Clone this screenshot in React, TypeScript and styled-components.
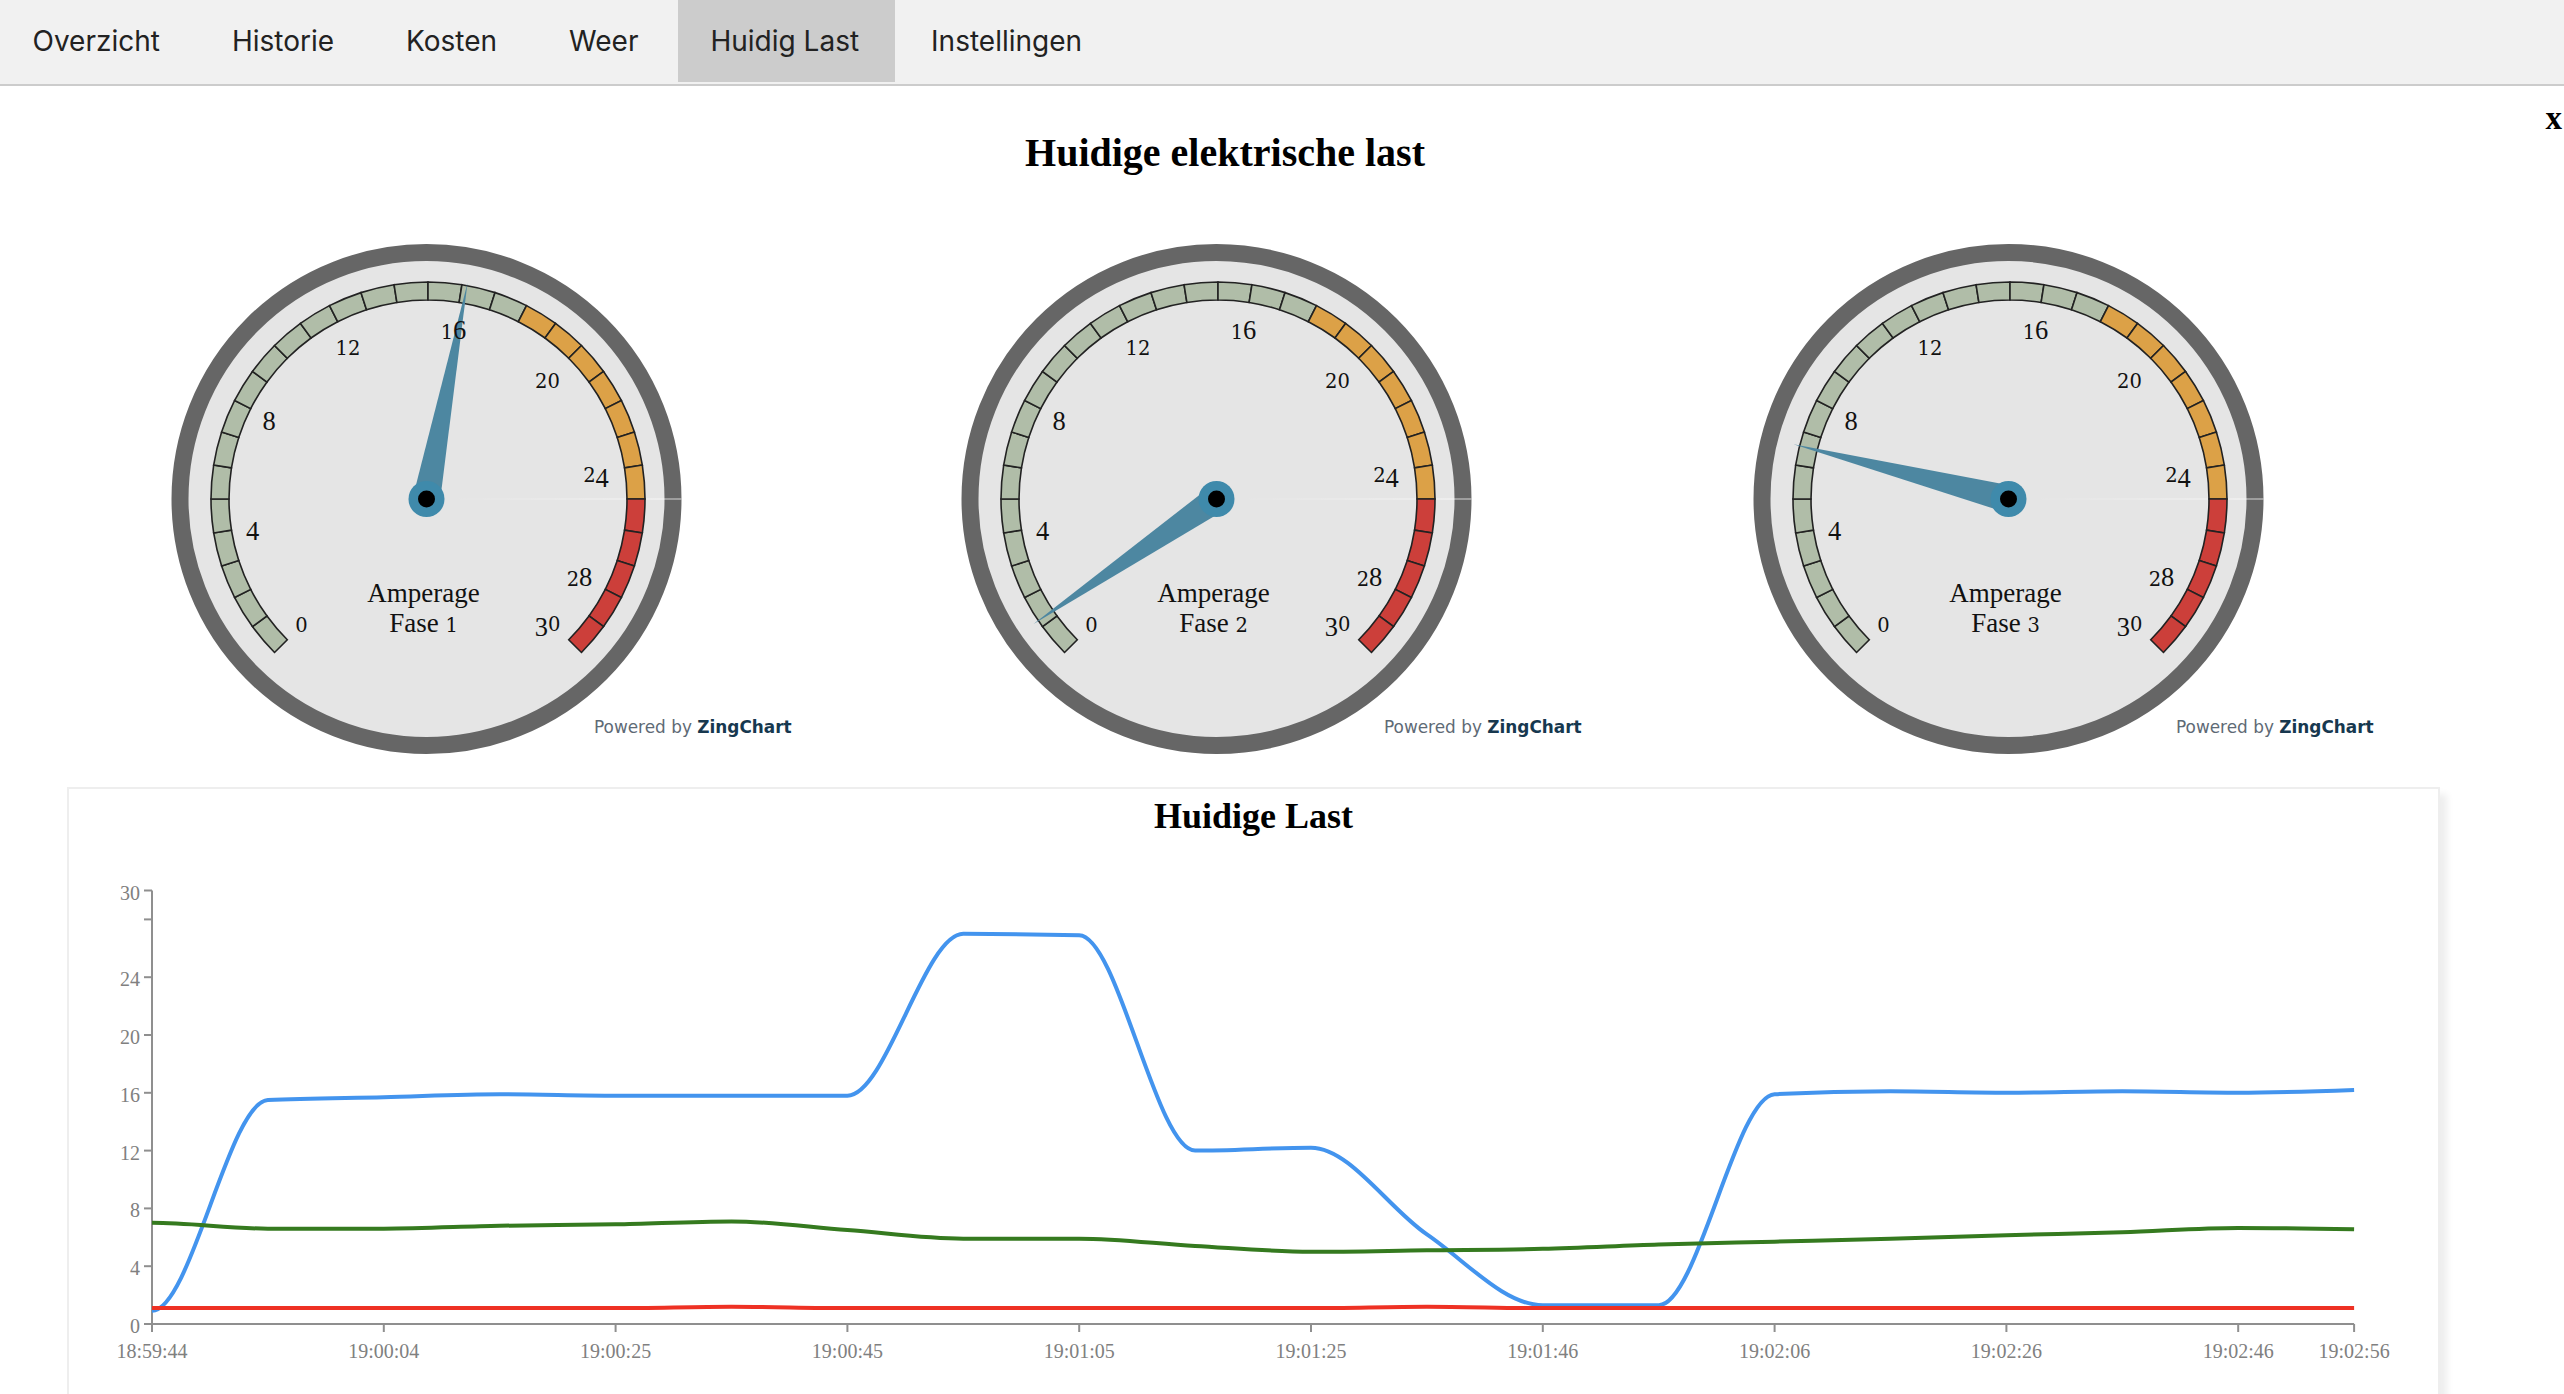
import React from "react";
import styled, { createGlobalStyle } from "styled-components";

const GlobalStyle = createGlobalStyle`
  html, body { margin: 0; padding: 0; background: #fff; }
  body { height: 1394px; overflow: hidden; font-family: "Liberation Serif", serif; }
`;

const TabBar = styled.nav`
  display: flex;
  align-items: flex-start;
  gap: 3.5px;
  height: 84px;
  background: #f1f1f1;
  border-bottom: 2px solid #ccc;
`;
const Tab = styled.button<{ $active?: boolean }>`
  height: 82px;
  padding: 0 36px 0 32.5px;
  border: 0;
  background: ${(p) => (p.$active ? "#ccc" : "transparent")};
  color: #222;
  font: 28px Inter, "Liberation Sans", Arial, sans-serif;
`;

const HeadingRow = styled.header`
  display: flex;
  align-items: flex-start;
  height: 150px;
`;
const PageTitle = styled.h2`
  flex: 0 0 2450px;
  margin: 0;
  padding-top: 44px;
  font: bold 40px/46px "Liberation Serif", serif;
  color: #000;
  text-align: center;
`;
const CloseMark = styled.span`
  margin-left: auto;
  padding: 9px 2px 0 0;
  font: bold 33px/46px "Liberation Serif", serif;
  color: #000;
`;

const GaugeRow = styled.section`
  display: grid;
  grid-template-columns: 790px 792px 760px;
  height: 551px;
  padding-left: 31px;
`;
const GaugeCell = styled.figure`
  position: relative;
  width: 760px;
  height: 551px;
  margin: 0;
`;
const GaugeSvg = styled.svg`
  display: block;
  width: 760px;
  height: 551px;
`;
const Credit = styled.a`
  position: absolute;
  left: 563px;
  top: 481px;
  font: 16.9px/20px "DejaVu Sans", Verdana, sans-serif;
  color: #5e6a75;
  white-space: nowrap;
`;
const CreditBrand = styled.b`
  color: #17384f;
`;
const GaugeText = styled.text`
  font-family: "Liberation Serif", serif;
  font-size: 27px;
  fill: #111;
  text-anchor: middle;
`;
const Digit = styled.tspan<{ $small: boolean }>`
  font-family: ${(p) => (p.$small ? '"DejaVu Serif", serif' : '"Liberation Serif", serif')};
  font-size: ${(p) => (p.$small ? "19.5px" : "26.5px")};
`;

const ChartCard = styled.section`
  width: 2369px;
  height: 700px;
  margin-left: 67px;
  border: 2px solid #eee;
  background: #fff;
  box-shadow: 7px 7px 7px rgba(0, 0, 0, 0.07);
`;
const ChartTitle = styled.h3`
  height: 60px;
  margin: 0;
  font: bold 36px/54px "Liberation Serif", serif;
  color: #000;
  text-align: center;
`;
const ChartSvg = styled.svg`
  display: block;
  width: 2369px;
  height: 600px;
`;
const AxisLabel = styled.text`
  font-family: "Liberation Serif", serif;
  font-size: 20px;
  fill: #808080;
  dominant-baseline: central;
`;

const CX = 395.5;
const CY = 263;
const BAND_CX = CX + 1.5;
const R_OUT = 217;
const R_IN = 199;

const polar = (r: number, value: number): [number, number] => {
  const a = ((value - 15) * 9 * Math.PI) / 180;
  return [BAND_CX + r * Math.sin(a), CY - r * Math.cos(a)];
};

const sector = (v: number) => {
  const [ax, ay] = polar(R_OUT, v);
  const [bx, by] = polar(R_OUT, v + 1);
  const [cx, cy] = polar(R_IN, v + 1);
  const [dx, dy] = polar(R_IN, v);
  return `M${ax} ${ay}A${R_OUT} ${R_OUT} 0 0 1 ${bx} ${by}L${cx} ${cy}A${R_IN} ${R_IN} 0 0 0 ${dx} ${dy}Z`;
};

const bandColor = (v: number) => (v < 18 ? "#b0bda8" : v < 25 ? "#dca147" : "#cc3f3a");

// x offset from centre, y offset of the text line from centre
const SCALE: [string, number, number][] = [
  ["0", -125, 133],
  ["4", -174, 36],
  ["8", -157.5, -69.5],
  ["12", -78.5, -144],
  ["16", 27, -160.5],
  ["20", 121, -111],
  ["24", 169.5, -17.5],
  ["28", 153, 87],
  ["30", 121, 132],
];

const Digits = ({ text }: { text: string }) => {
  let prev = 0;
  return (
    <>
      {text.split("").map((d, i) => {
        const small = "012".includes(d);
        const shift = "34579".includes(d) ? 5 : 0;
        const dy = shift - prev;
        prev = shift;
        return (
          <Digit key={i} $small={small} dy={dy}>
            {d}
          </Digit>
        );
      })}
    </>
  );
};

const Gauge = ({ phase, tip }: { phase: number; tip: [number, number] }) => {
  const len = Math.hypot(tip[0], tip[1]);
  const nx = (-tip[1] / len) * 13.7;
  const ny = (tip[0] / len) * 13.7;
  const segments = Array.from({ length: 30 }, (_, v) => v);
  return (
    <GaugeCell>
      <GaugeSvg viewBox="0 0 760 551">
        <defs>
          <linearGradient id={`glint${phase}`} x1="0" x2="1" y1="0" y2="0">
            <stop offset="0" stopColor="#fff" stopOpacity="0" />
            <stop offset="1" stopColor="#fff" stopOpacity="0.5" />
          </linearGradient>
        </defs>
        <circle cx={CX} cy={CY} r={246.5} fill="#e5e5e5" stroke="#666" strokeWidth={17} />
        <rect x={CX + 20} y={CY - 0.75} width={235} height={1.5} fill={`url(#glint${phase})`} />
        {segments.map((v) => (
          <path key={v} d={sector(v)} fill={bandColor(v)} stroke="#222" strokeWidth={1.6} />
        ))}
        <polygon
          points={`${CX + nx},${CY + ny} ${CX + tip[0]},${CY + tip[1]} ${CX - nx},${CY - ny}`}
          fill="#4d87a1"
        />
        {SCALE.map(([label, dx, dy]) => (
          <GaugeText key={label} x={CX + dx} y={CY + dy}>
            <Digits text={label} />
          </GaugeText>
        ))}
        <GaugeText x={CX - 3} y={CY + 103}>
          Amperage
        </GaugeText>
        <GaugeText x={CX - 3} y={CY + 133}>
          Fase <Digit $small dy={0}>{phase}</Digit>
        </GaugeText>
        <circle cx={CX} cy={CY} r={18} fill="#3f8aab" />
        <circle cx={CX} cy={CY} r={8.5} fill="#000" />
      </GaugeSvg>
      <Credit>
        Powered by <CreditBrand>ZingChart</CreditBrand>
      </Credit>
    </GaugeCell>
  );
};

const X0 = 83;
const XSTEP = 115.9;
const Y0 = 475;
const YU = 14.45;
const px = (i: number) => X0 + XSTEP * i;
const py = (v: number) => Y0 - YU * v;

const BLUE = [0.92, 15.5, 15.7, 15.9, 15.8, 15.8, 15.8, 27, 26.9, 12, 12.2, 6.2, 1.3, 1.3, 15.9, 16.1, 16, 16.1, 16, 16.2];
const GREEN = [7, 6.6, 6.6, 6.8, 6.9, 7.1, 6.5, 5.9, 5.9, 5.4, 5, 5.1, 5.2, 5.5, 5.7, 5.9, 6.15, 6.35, 6.65, 6.55];
const RED = [1.1, 1.1, 1.1, 1.1, 1.1, 1.2, 1.1, 1.1, 1.1, 1.1, 1.1, 1.2, 1.1, 1.1, 1.1, 1.1, 1.1, 1.1, 1.1, 1.1];

// Monotone cubic interpolation along x; the curve leaves its first point flat.
const monotone = (vals: number[]) => {
  const ys = vals.map(py);
  const n = ys.length;
  const s = ys.slice(1).map((y, i) => (y - ys[i]) / XSTEP);
  const m = ys.map((_, i) => {
    if (i === 0 || i === n - 1) return 0;
    const a = s[i - 1];
    const b = s[i];
    const sign = (Math.sign(a) + Math.sign(b)) || 0;
    return sign * Math.min(Math.abs(a), Math.abs(b), 0.5 * Math.abs((a + b) / 2)) || 0;
  });
  m[n - 1] = (3 * s[n - 2] - m[n - 2]) / 2;
  let d = `M${px(0)} ${ys[0]}`;
  for (let i = 0; i < n - 1; i++) {
    const h = XSTEP / 3;
    d += `C${px(i) + h} ${ys[i] + h * m[i]} ${px(i + 1) - h} ${ys[i + 1] - h * m[i + 1]} ${px(i + 1)} ${ys[i + 1]}`;
  }
  return d;
};

const Y_TICKS: [number, string][] = [
  [30, "30"],
  [28, ""],
  [24, "24"],
  [20, "20"],
  [16, "16"],
  [12, "12"],
  [8, "8"],
  [4, "4"],
  [0, "0"],
];
const X_TICKS: [number, string][] = [
  [0, "18:59:44"],
  [2, "19:00:04"],
  [4, "19:00:25"],
  [6, "19:00:45"],
  [8, "19:01:05"],
  [10, "19:01:25"],
  [12, "19:01:46"],
  [14, "19:02:06"],
  [16, "19:02:26"],
  [18, "19:02:46"],
  [19, "19:02:56"],
];

const LoadChart = () => (
  <ChartSvg viewBox="0 0 2369 600">
    <g stroke="#8f8f8f" strokeWidth={2} fill="none">
      <path d={`M${px(0)} ${py(30)}V${py(0)}H${px(19)}`} />
      {Y_TICKS.map(([v]) => (
        <path key={v} d={`M${X0 - 8} ${py(v)}H${X0}`} />
      ))}
      {X_TICKS.map(([i]) => (
        <path key={i} d={`M${px(i)} ${Y0}v8`} />
      ))}
    </g>
    {Y_TICKS.map(([v, label]) => (
      <AxisLabel key={v} x={X0 - 12} y={py(v) + 2} textAnchor="end">
        {label}
      </AxisLabel>
    ))}
    {X_TICKS.map(([i, label]) => (
      <AxisLabel key={i} x={px(i)} y={Y0 + 27} textAnchor="middle">
        {label}
      </AxisLabel>
    ))}
    <g fill="none" strokeWidth={4}>
      <path d={monotone(BLUE)} stroke="#4394ee" />
      <path d={monotone(GREEN)} stroke="#357a1f" />
      <path d={monotone(RED)} stroke="#ee3124" />
    </g>
  </ChartSvg>
);

const TABS = ["Overzicht", "Historie", "Kosten", "Weer", "Huidig Last", "Instellingen"];

export default function App() {
  return (
    <>
      <GlobalStyle />
      <TabBar>
        {TABS.map((t) => (
          <Tab key={t} $active={t === "Huidig Last"}>
            {t}
          </Tab>
        ))}
      </TabBar>
      <HeadingRow>
        <PageTitle>Huidige elektrische last</PageTitle>
        <CloseMark>x</CloseMark>
      </HeadingRow>
      <GaugeRow>
        <Gauge phase={1} tip={[41, -216]} />
        <Gauge phase={2} tip={[-183, 125]} />
        <Gauge phase={3} tip={[-215, -54.7]} />
      </GaugeRow>
      <ChartCard>
        <ChartTitle>Huidige Last</ChartTitle>
        <LoadChart />
      </ChartCard>
    </>
  );
}
